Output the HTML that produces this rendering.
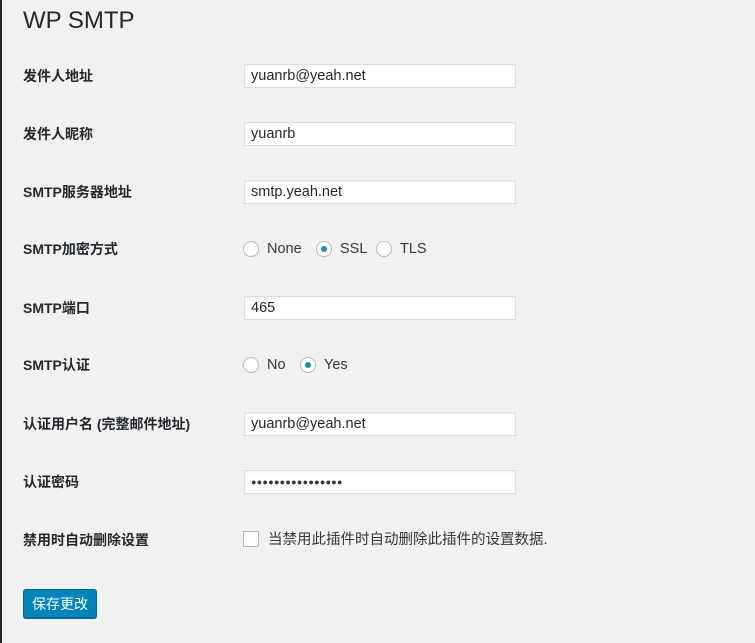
<!DOCTYPE html>
<html><head><meta charset="utf-8"><style>
body{margin:0;width:755px;height:643px;background:#f1f1f1;position:relative;overflow:hidden;font-family:"Liberation Sans","Noto Sans CJK SC",sans-serif;color:#23282d}
.edge{position:absolute;left:0;top:0;width:2px;height:643px;background:#23282d}
h1{position:absolute;left:23px;top:6px;margin:0;font-size:24px;font-weight:400;line-height:30px}
.lbl{position:absolute;left:23px;font-size:14px;font-weight:bold;line-height:20px}
.inp{position:absolute;left:244px;height:22px;background:#fff;border:1px solid #ddd;box-shadow:inset 0 1px 2px rgba(0,0,0,.07);font-size:14.5px;line-height:22px;padding-left:6px;box-sizing:content-box;width:264px}
.opt{position:absolute;font-size:14.5px;line-height:20px;color:#32373c}
.r{position:absolute;width:14px;height:14px;border:1px solid #b4b9be;border-radius:50%;background:#fff}
.r.on::after{content:"";position:absolute;left:4px;top:4px;width:6px;height:6px;border-radius:50%;background:#1e8cbe}
.btn{position:absolute;left:23px;top:589px;width:72px;height:27px;background:#0085ba;border:1px solid #006799;border-radius:3px;box-shadow:0 1px 0 #006799;color:#fff;font-size:14px;line-height:29px;text-align:center}
</style></head><body>
<div class="edge"></div>
<h1>WP SMTP</h1>
<div class="lbl" style="top:66px">发件人地址</div><div class="inp" style="top:64px">yuanrb@yeah.net</div>
<div class="lbl" style="top:124px">发件人昵称</div><div class="inp" style="top:122px">yuanrb</div>
<div class="lbl" style="top:182px">SMTP服务器地址</div><div class="inp" style="top:180px">smtp.yeah.net</div>
<div class="lbl" style="top:239px">SMTP加密方式</div>
<div class="r" style="left:243px;top:241px"></div><div class="opt" style="left:267px;top:239px">None</div>
<div class="r on" style="left:316px;top:241px"></div><div class="opt" style="left:340px;top:239px">SSL</div>
<div class="r" style="left:376px;top:241px"></div><div class="opt" style="left:400px;top:239px">TLS</div>
<div class="lbl" style="top:298px">SMTP端口</div><div class="inp" style="top:296px">465</div>
<div class="lbl" style="top:355px">SMTP认证</div>
<div class="r" style="left:243px;top:357px"></div><div class="opt" style="left:267px;top:355px">No</div>
<div class="r on" style="left:300px;top:357px"></div><div class="opt" style="left:324px;top:355px">Yes</div>
<div class="lbl" style="top:414px">认证用户名 (完整邮件地址)</div><div class="inp" style="top:412px">yuanrb@yeah.net</div>
<div class="lbl" style="top:472px">认证密码</div><div class="inp" style="top:470px;font-size:9px;letter-spacing:0.3px;color:#32373c">●●●●●●●●●●●●●●●●</div>
<div class="lbl" style="top:530px">禁用时自动删除设置</div>
<div style="position:absolute;left:243px;top:531px;width:14px;height:14px;border:1px solid #b4b9be;background:#fff"></div>
<div class="opt" style="left:268px;top:530px">当禁用此插件时自动删除此插件的设置数据.</div>
<div class="btn">保存更改</div>
</body></html>
